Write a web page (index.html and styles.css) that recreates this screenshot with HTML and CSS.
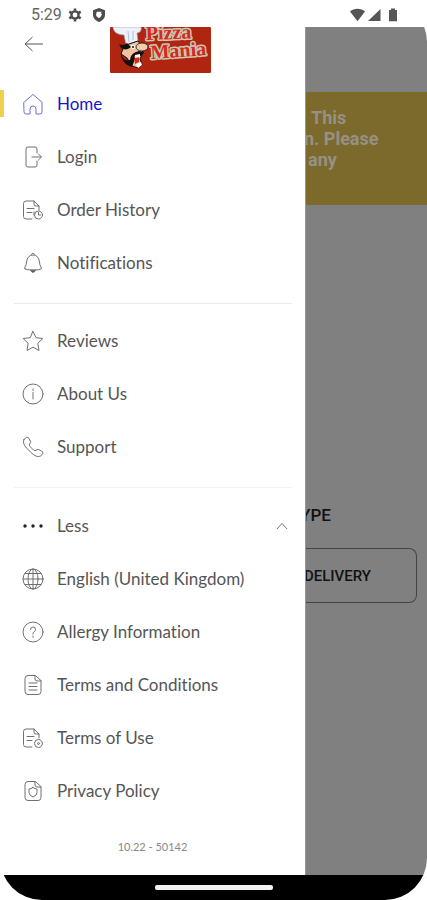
FILE: index.html
```html
<!DOCTYPE html>
<html lang="en-GB">
<head>
  <meta charset="UTF-8" />
  <meta name="viewport" content="width=device-width, initial-scale=1" />
  <title>Pizza Mania - Menu</title>
  <link rel="stylesheet" href="styles.css">
</head>
<body>
  <div class="phone">
    <!-- STATUS BAR -->
    <header class="status-bar">
      <span class="clock">5:29</span>
      <svg class="status-icon" viewBox="0 0 14 14" aria-hidden="true">
        <circle cx="7" cy="7" r="3.6" fill="none" stroke="#4c4c4c" stroke-width="2.4" />
        <path d="M7 .4v2.4M7 11.2v2.4M1.3 3.7l2 1.2M10.7 9.1l2 1.2M1.3 10.3l2-1.2M10.7 4.9l2-1.2" stroke="#4c4c4c" stroke-width="2.6" />
      </svg>
      <svg class="status-icon shield" viewBox="0 0 14 14" aria-hidden="true">
        <path d="M7 0l6 2.2v4.6c0 3.4-2.6 6-6 7.2-3.4-1.2-6-3.8-6-7.2V2.2z" fill="#4c4c4c" />
        <path d="M5 3.8h4.600l-.6 1.600 1 .8-1.400 2.800L7 10.200 4.200 8V5.200z" fill="#fff" />
      </svg>
      <svg class="signals" viewBox="0 0 48 14" aria-hidden="true">
        <path d="M0 3.500C4-.2 11-.2 15 3.500L7.500 13.200z" fill="#555" />
        <path d="M30.500 1v12H18z" fill="#555" />
        <path d="M41 .5h4V2h2v11.200h-8V2h2z" fill="#555" />
      </svg>
    </header>

    <div class="screen">
      <!-- SIDE MENU -->
      <aside class="drawer">
        <div class="drawer-header">
          <button class="back-btn" aria-label="Back">
            <svg viewBox="0 0 20 16" aria-hidden="true"><path d="M19 8H1M8.500 1L1 8l7.500 7" /></svg>
          </button>
          <svg class="logo" viewBox="0 0 101 46" role="img" aria-label="Pizza Mania">
            <rect width="101" height="46" rx="1" fill="#b02510" />
            <g class="logo-text">
              <text x="36" y="13" transform="rotate(-2 36 13)">Pizza</text>
              <text x="41" y="32" transform="rotate(-4 41 32)">Mania</text>
            </g>
            <path d="M3 0h28c1 3-1 6-4 6l1 8-12 4-2-10C8 8 3 5 3 0z" fill="#eef1f8" stroke="#8e9bb8" stroke-width=".6" />
            <path d="M18 4l1 11M23 4v9" stroke="#aab4ca" stroke-width=".8" />
            <path d="M16 18l12-4 3 4 2 8-3 6 2 6-4 3-6-2-5-8-6-4 2-5z" fill="#f0c4a0" stroke="#111" />
            <ellipse cx="32" cy="20" rx="6" ry="4" fill="#f3cda8" stroke="#111" stroke-width=".8" />
            <path d="M9 17c3 2 5 1 8-1l4 4c-3 3-7 3-10 1zM11 25c1 6 3 9 9 8 1-5 2-7 9-9l5 1-3 4-6 3-3 8c-6-1-12-8-11-15z" fill="#15100d" />
            <circle cx="23" cy="20" r="2" fill="#fff" /><circle cx="23" cy="20" r="1" fill="#111" />
            <path d="M24 29l5-1v7l-4 2z" fill="#d92a1c" /><path d="M25 28l5-1v3l-5 1zM26 37l5-2 1 3-4 3z" fill="#fff" />
          </svg>
        </div>

        <nav class="menu">
          <ul>
            <li><a class="item active" href="#home">
              <svg class="icon" viewBox="0 0 22 22"><path d="M2 9.200L11 1.500l9 7.700v9.800q0 2-2 2h-4v-5q0-3-3-3t-3 3v5H4q-2 0-2-2z" /></svg>
              Home</a></li>
            <li><a class="item" href="#login">
              <svg class="icon" viewBox="0 0 22 22"><path d="M15 7V3q0-2-2-2H6Q4 1 4 3v16q0 2 2 2h7q2 0 2-2v-4M10 11h9M16.500 8l3 3-3 3" /></svg>
              Login</a></li>
            <li><a class="item" href="#orders">
              <svg class="icon" viewBox="0 0 22 22"><path d="M10 20H4q-2.500 0-2.500-2.500v-13Q1.500 2 4 2h8l5 5v4M12 2v3q0 2 2 2h3M5 9.500h7M5 13.500h5" /><circle cx="16.500" cy="16" r="4" /><path d="M16.500 13.500V16h2M12 13v3" /></svg>
              Order History</a></li>
            <li><a class="item" href="#notifications">
              <svg class="icon" viewBox="0 0 22 22"><path d="M9.500 2.500Q11-.5 12.500 2.500M3 17q-1-.5 0-2 1.500-2 1.500-5Q5.500 3 11 3t6.500 7q0 3 1.500 5 1 1.500 0 2-1 1-8 1t-8-1z" /><path d="M8.500 18.500q2.500 4 5 0z" fill="#555" /></svg>
              Notifications</a></li>
          </ul>
          <ul>
            <li><a class="item" href="#reviews">
              <svg class="icon" viewBox="0 0 22 22"><path d="M11 1.500l3 6.200 6.800.8-5 4.800L17 20.500l-6-3.400-6 3.400 1.200-7.200-5-4.800L8 7.700z" /></svg>
              Reviews</a></li>
            <li><a class="item" href="#about">
              <svg class="icon" viewBox="0 0 22 22"><circle cx="11" cy="11" r="10" /><path d="M11 9.500V16M11 6v1.500" /></svg>
              About Us</a></li>
            <li><a class="item" href="#support">
              <svg class="icon" viewBox="0 0 22 22"><path d="M2 3.500Q5-.5 7 2.500l1.500 2.800Q9 7 7.500 8 7 9 8 10.500l3.500 3.500q1.500 1 2.500.5 1-1.500 2.700-1l2.800 1.500q3 2-1 5-4 2-9.500-3.500L4.500 12Q0 7 2 3.500z" /></svg>
              Support</a></li>
          </ul>
          <ul>
            <li><button class="item" aria-expanded="true">
              <svg class="icon dots" viewBox="0 0 22 22"><circle cx="3" cy="11" r="1.700" /><circle cx="11" cy="11" r="1.700" /><circle cx="19" cy="11" r="1.700" /></svg>
              Less
              <svg class="chevron" viewBox="0 0 12 8"><path d="M1 7l5-5.500L11 7" /></svg>
            </button></li>
            <li><a class="item" href="#language">
              <svg class="icon" viewBox="0 0 22 22"><circle cx="11" cy="11" r="10" /><path d="M11 1v20M1 11h20M3 5.500h16M3 16.500h16" /><ellipse cx="11" cy="11" rx="5" ry="10" /></svg>
              English (United Kingdom)</a></li>
            <li><a class="item" href="#allergy">
              <svg class="icon" viewBox="0 0 22 22"><circle cx="11" cy="11" r="10" /><path d="M8.500 8.500Q8.500 6 11 6t2.500 2.500q0 1.500-1.300 2.200T11 13M11 15v1.300" /></svg>
              Allergy Information</a></li>
            <li><a class="item" href="#terms">
              <svg class="icon" viewBox="0 0 22 22"><path d="M13 1.500H6Q3 1.500 3 4.500v13q0 3 3 3h10q3 0 3-3V7zM13 1.500V5q0 2 2 2h4M7 9h8M7 12.500h8M7 16h8" /></svg>
              Terms and Conditions</a></li>
            <li><a class="item" href="#use">
              <svg class="icon" viewBox="0 0 22 22"><path d="M10 20H4q-2.500 0-2.500-2.500v-13Q1.500 2 4 2h8l5 5v4M12 2v3q0 2 2 2h3M5 9.500h7M5 13.500h5" /><circle cx="16.500" cy="16.500" r="4" /><circle cx="16.500" cy="16.500" r="1" /></svg>
              Terms of Use</a></li>
            <li><a class="item" href="#privacy">
              <svg class="icon" viewBox="0 0 22 22"><path d="M13 1.500H6Q3 1.500 3 4.500v13q0 3 3 3h10q3 0 3-3V7zM13 1.500V5q0 2 2 2h4" /><path d="M11 7.500q2 1.300 4 1.500v3.500q0 3-4 4.500-4-1.500-4-4.500V9q2-.2 4-1.500z" /></svg>
              Privacy Policy</a></li>
          </ul>
        </nav>
        <p class="version">10.22 - 50142</p>
      </aside>

      <!-- PAGE BEHIND THE MENU -->
      <main class="page">
        <div class="banner">
          <p class="indent">This</p>
          <p>n. Please</p>
          <p class="indent">any</p>
        </div>
        <div class="order">
          <h2>YPE</h2>
          <button class="delivery">DELIVERY</button>
        </div>
      </main>
    </div>

    <!-- GESTURE BAR -->
    <footer class="gesture-bar"><span></span></footer>
  </div>
</body>
</html>
```
FILE: styles.css
```css
:root {
  --text: #555;
  --active: #1414c8;
  --yellow: #f0cf4f;
  --dimmed: #808080;
  --banner: #7b6a2b;
}

* {
  box-sizing: border-box;
}

body {
  margin: 0;
  background: #fff;
  color: var(--text);
  font-family: Lato, sans-serif;
  font-variant-ligatures: none;
}

p,
h2,
ul {
  margin: 0;
  padding: 0;
}

button {
  background: none;
  border: none;
  padding: 0;
  font-family: inherit;
  cursor: pointer;
}

svg {
  display: block;
  flex: none;
}

.phone {
  display: flex;
  flex-direction: column;
  min-height: 100vh;
  border-radius: 42px;
  overflow: hidden;
}

/* status bar */
.status-bar {
  display: flex;
  align-items: center;
  height: 27px;
  padding: 2px 29px 0 31px;
}

.clock {
  font: 16px/20px Roboto, sans-serif;
  color: #666;
}

.status-icon {
  width: 14px;
  height: 14px;
  margin-left: 6px;
}

.shield {
  margin-left: 10px;
}

.signals {
  width: 48px;
  height: 14px;
  margin-left: auto;
}

.screen {
  display: grid;
  grid-template-columns: 5fr 2fr;
  flex: 1;
}

/* side menu */
.drawer {
  display: flex;
  flex-direction: column;
}

.drawer-header {
  display: flex;
  align-items: flex-start;
  height: 50px;
  padding-left: 24px;
}

.back-btn {
  padding: 9px 0;
}

.back-btn svg {
  width: 20px;
  height: 16px;
  fill: none;
  stroke: #555;
}

.logo {
  width: 101px;
  height: 46px;
  margin-left: 66px;
}

.logo-text {
  font: bold 20px "Liberation Serif", serif;
  fill: #d8281c;
  stroke: #c9c9b4;
  stroke-width: 3px;
  stroke-linejoin: round;
  paint-order: stroke;
}

.menu ul {
  list-style: none;
}

.menu ul + ul {
  padding-top: 11px;
  margin-top: 14px;
  background: linear-gradient(#eaeaea, #eaeaea) 14px 0 / calc(100% - 27px) 1px no-repeat;
}

.menu ul:last-child {
  padding-top: 12px;
  background-image: linear-gradient(#f2f2f2, #f2f2f2);
}

.item {
  display: flex;
  align-items: center;
  gap: 13px;
  width: 100%;
  height: 53px;
  padding: 0 17px 0 22px;
  color: var(--text);
  font-size: 17px;
  line-height: 24px;
  text-decoration: none;
}

.active {
  color: var(--active);
  background: linear-gradient(var(--yellow), var(--yellow)) 0 50% / 4px 27px no-repeat;
}

.icon {
  width: 22px;
  height: 22px;
  fill: none;
  stroke: #707070;
  stroke-width: 1;
  stroke-linecap: round;
  stroke-linejoin: round;
}

.active .icon {
  stroke: #6f6fce;
}

.dots {
  fill: #222;
  stroke: none;
}

.chevron {
  width: 12px;
  height: 8px;
  margin-left: auto;
  fill: none;
  stroke: #777;
}

.version {
  margin-top: 20px;
  color: #888;
  font-size: 11px;
  line-height: 20px;
  text-align: center;
}

.page {
  overflow: hidden;
  background: var(--dimmed);
  border-left: 1px solid #999;
  font-family: Roboto, sans-serif;
}

.banner {
  height: 113px;
  margin-top: 65px;
  padding-top: 15px;
  background: var(--banner);
  color: #969183;
  font-size: 18px;
  font-weight: bold;
  line-height: 21px;
  text-indent: -2px;
}

.banner .indent {
  text-indent: 5px;
}

.banner .indent:last-child {
  text-indent: 2px;
}

.order {
  padding: 298px 10px 0 0;
}

.order h2 {
  color: #111;
  font-size: 17px;
  font-weight: 500;
  line-height: 24px;
  text-indent: -6px;
}

.delivery {
  width: 100%;
  height: 55px;
  margin-top: 21px;
  border: 1px solid #444;
  border-left: none;
  border-radius: 0 8px 8px 0;
  color: #111;
  font-size: 15px;
  font-weight: 500;
  text-align: left;
  text-indent: -2px;
}

/* gesture bar */
.gesture-bar {
  display: flex;
  justify-content: center;
  align-items: center;
  height: 25px;
  background: #000;
}

.gesture-bar span {
  width: 118px;
  height: 5px;
  border-radius: 2px;
  background: #f2f2f2;
}
```
